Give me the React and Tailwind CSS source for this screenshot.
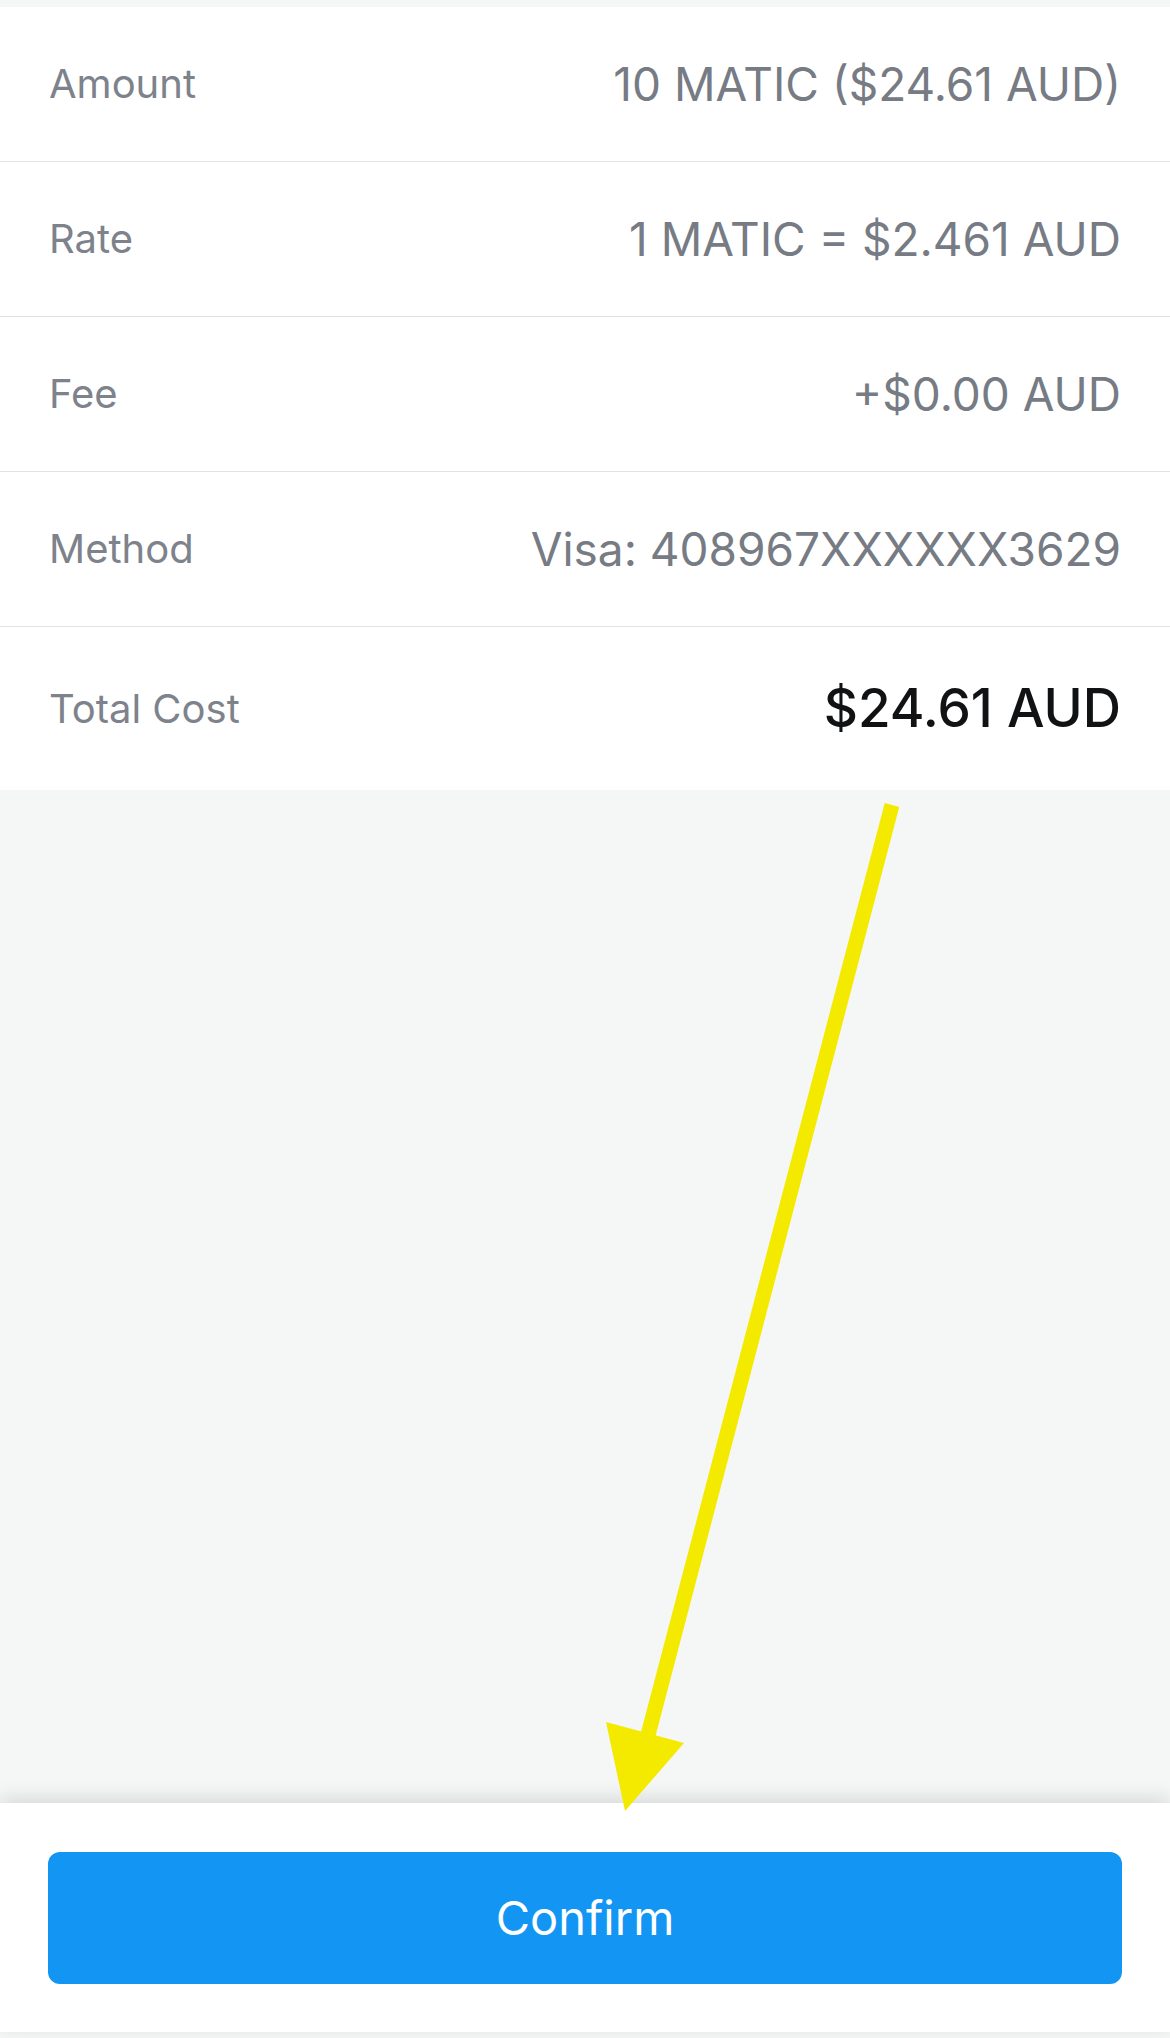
const rows = [
  { label: "Amount", value: "10 MATIC ($24.61 AUD)" },
  { label: "Rate", value: "1 MATIC = $2.461 AUD" },
  { label: "Fee", value: "+$0.00 AUD" },
  { label: "Method", value: "Visa: 408967XXXXXX3629" },
];

function Arrow() {
  return (
    <svg
      className="absolute left-0 top-0 pointer-events-none"
      width="1170"
      height="2038"
      viewBox="0 0 1170 2038"
    >
      <line
        x1="892"
        y1="805"
        x2="648"
        y2="1735"
        stroke="#f4ea00"
        strokeWidth="15"
      />
      <polygon points="606,1722 684,1743 625,1811" fill="#f4ea00" />
    </svg>
  );
}

export default function App() {
  return (
    <div
      className="relative h-[2038px] w-[1170px] flex flex-col bg-[#f5f7f7]"
      style={{ fontFamily: "Inter, 'Noto Sans', sans-serif" }}
    >
      <div className="h-[7px]" />

      <div className="bg-white">
        {rows.map((row) => (
          <div
            key={row.label}
            className="h-[155px] px-[49px] flex items-center justify-between border-b border-[#e1e1e6]"
          >
            <span className="text-[40px] text-[#7d828b]">{row.label}</span>
            <span className="text-[46px] text-[#767b84]">{row.value}</span>
          </div>
        ))}

        <div className="h-[163px] px-[49px] flex items-center justify-between">
          <span className="text-[40px] text-[#7d828b]">Total Cost</span>
          <span className="text-[53px] font-medium text-[#111214]">
            $24.61 AUD
          </span>
        </div>
      </div>

      <div className="flex-1" />

      <div className="bg-white pt-[49px] pb-[48px] px-[48px] shadow-[0_-5px_18px_rgba(0,0,0,0.12)]">
        <button className="w-full h-[132px] rounded-[12px] bg-[#1396f3] text-white text-[47px]">
          Confirm
        </button>
      </div>

      <div className="h-[6px]" />

      <Arrow />
    </div>
  );
}
